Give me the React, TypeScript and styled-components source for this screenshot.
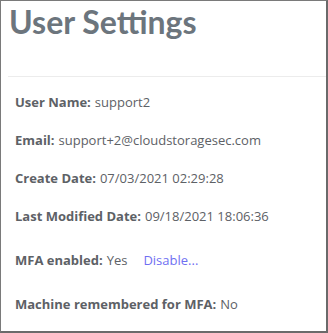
import React from "react";
import styled, { createGlobalStyle } from "styled-components";

const GlobalStyle = createGlobalStyle`
  html, body {
    margin: 0;
    padding: 0;
    background: #ffffff;
  }
  body {
    font-family: "Open Sans", "Liberation Sans", sans-serif;
  }
`;

const Frame = styled.div`
  box-sizing: border-box;
  width: 328px;
  height: 333px;
  border-style: solid;
  border-color: #7a7a7a #6a6a6a #6a6a6a #7a7a7a;
  border-width: 1px 2px 2px 1px;
  background: #ffffff;
  overflow: hidden;
`;

const Title = styled.h1`
  margin: 0;
  padding: 0 0 0 8px;
  height: 44px;
  font-family: Lato, "Open Sans", sans-serif;
  font-size: 32px;
  line-height: 42px;
  font-weight: 700;
  color: #6c757d;
`;

const Divider = styled.hr`
  margin: 31px 0 0 7px;
  border: 0;
  border-top: 1px solid #ececec;
`;

const Details = styled.div`
  display: flex;
  flex-direction: column;
  padding: 16px 0 0 14px;
`;

const Row = styled.div<{ $gap: number }>`
  margin-bottom: ${(p) => p.$gap}px;
  font-size: 13px;
  line-height: 18px;
  color: #5d6166;
  display: flex;
  align-items: baseline;
`;

const Label = styled.span`
  font-weight: 700;
  margin-right: 4px;
`;

const Action = styled.a`
  margin-left: 16px;
  color: #6f6ff2;
  text-decoration: none;
  cursor: pointer;
`;

export default function App() {
  return (
    <>
      <GlobalStyle />
      <Frame>
        <Title>User Settings</Title>
        <Divider />
        <Details>
          <Row $gap={20}>
            <Label>User Name:</Label>support2
          </Row>
          <Row $gap={20}>
            <Label>Email:</Label>support+2@cloudstoragesec.com
          </Row>
          <Row $gap={20}>
            <Label>Create Date:</Label>07/03/2021 02:29:28
          </Row>
          <Row $gap={26}>
            <Label>Last Modified Date:</Label>09/18/2021 18:06:36
          </Row>
          <Row $gap={26}>
            <Label>MFA enabled:</Label>Yes
            <Action>Disable...</Action>
          </Row>
          <Row $gap={0}>
            <Label>Machine remembered for MFA:</Label>No
          </Row>
        </Details>
      </Frame>
    </>
  );
}
